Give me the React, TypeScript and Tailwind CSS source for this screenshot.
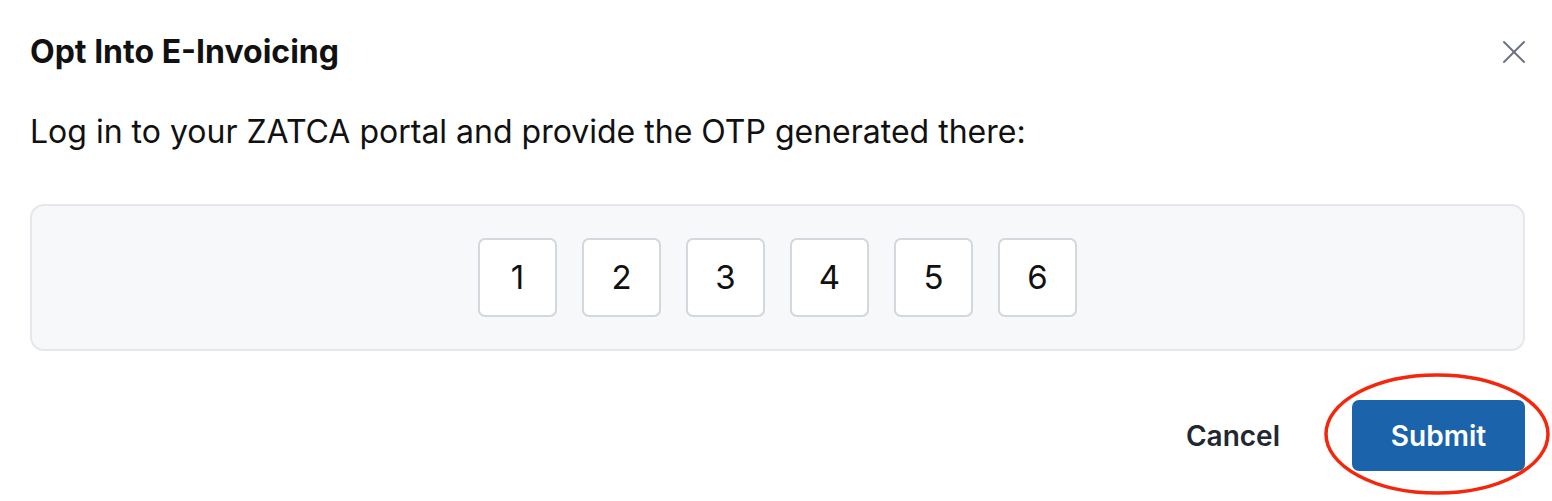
import { X } from 'lucide-react'

const DIGITS = ['1', '2', '3', '4', '5', '6']

export default function App() {
  return (
    <div className="relative w-[1552px] h-[501px] bg-white font-['Inter',sans-serif] overflow-hidden">
      <div className="pl-[30px] pr-[27px] pt-[32px]">
        {/* Header */}
        <div className="flex items-start justify-between">
          <h2 className="text-[32px] font-bold leading-[40px] text-[#111111]">Opt Into E-Invoicing</h2>
          <button className="mr-[-9px] text-[#6b7280]">
            <X size={40} strokeWidth={1.2} />
          </button>
        </div>

        <p className="mt-[40px] text-[32px] leading-[40px] text-[#111111]">
          Log in to your ZATCA portal and provide the OTP generated there:
        </p>

        {/* OTP box */}
        <div className="mt-[52px] flex justify-center gap-[25px] rounded-[14px] border-2 border-[#e4e7eb] bg-[#f7f8fa] py-[32px]">
          {DIGITS.map((d) => (
            <div
              key={d}
              className="flex h-[79px] w-[79px] items-center justify-center rounded-[7px] border-2 border-[#d3d8de] bg-white text-[33px] text-[#111111]"
            >
              {d}
            </div>
          ))}
        </div>

        {/* Footer */}
        <div className="mt-[49px] flex items-center justify-end gap-[72px]">
          <button className="text-[28px] font-semibold text-[#222831]">Cancel</button>
          <button className="h-[71px] w-[173px] rounded-[7px] bg-[#1b63aa] text-[28px] font-semibold text-white">
            Submit
          </button>
        </div>
      </div>

      {/* Annotation ring */}
      <svg className="absolute left-[1322px] top-[370px]" width="230" height="126" viewBox="0 0 230 126">
        <ellipse cx="115" cy="64" rx="111" ry="59" fill="none" stroke="#f4260b" strokeWidth="3.5" />
      </svg>
    </div>
  )
}
